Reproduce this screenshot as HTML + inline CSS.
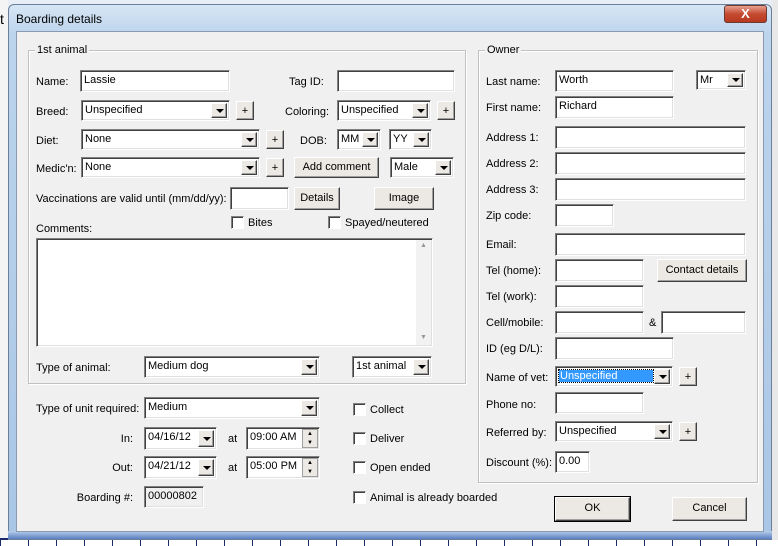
<!DOCTYPE html>
<html><head><meta charset="utf-8"><style>
*{box-sizing:border-box;margin:0;padding:0}
body{width:778px;height:546px;overflow:hidden;position:relative;background:#e8eef5;font-family:"Liberation Sans",sans-serif;font-size:11px;color:#000}
.a{position:absolute}
.l{position:absolute;white-space:nowrap;line-height:14px}
.in{position:absolute;background:#fff;border-top:1px solid #808080;border-left:1px solid #808080;border-right:1px solid #fff;border-bottom:1px solid #fff;box-shadow:inset 1px 1px 0 #404040,inset -1px -1px 0 #e0e0e0;padding:2px 0 0 3px;white-space:nowrap;line-height:14px;overflow:hidden}
.cb .ar{position:absolute;right:2px;top:2px;bottom:2px;width:16px;background:#ece9e4;border:1px solid;border-color:#fff #404040 #404040 #fff;box-shadow:inset -1px -1px 0 #a0a0a0}
.ar:after{content:"";position:absolute;left:4px;top:50%;margin-top:-2px;border-left:4px solid transparent;border-right:4px solid transparent;border-top:4px solid #000}
.bt{position:absolute;background:#ece9e4;border:1px solid;border-color:#fff #404040 #404040 #fff;box-shadow:inset -1px -1px 0 #a0a0a0;text-align:center;line-height:18px;white-space:nowrap}
.ck{position:absolute;width:13px;height:13px;background:#fff;border-top:1px solid #808080;border-left:1px solid #808080;border-right:1px solid #fff;border-bottom:1px solid #fff;box-shadow:inset 1px 1px 0 #404040}
.gb{position:absolute;border:1px solid #c0c0c0;box-shadow:1px 1px 0 #fff,inset 1px 1px 0 #fff}
.lg{position:absolute;top:-8px;left:6px;background:#f0f0f0;padding:0 2px;line-height:14px}
.r{text-align:right}
</style></head><body>
<div class="a" style="left:0;top:0;width:8px;height:546px;background:#f4f4f4"></div>
<div class="l" style="left:0;top:12px;font-size:14px">t</div>
<div class="a" style="left:0;top:540px;width:778px;height:6px;background:repeating-linear-gradient(90deg,#1a2a6a 0 1px,#fff 1px 28px)"></div>
<div class="a" style="left:0;top:538px;width:778px;height:2px;background:#1a2a6a"></div>
<div class="a" style="left:772px;top:0;width:6px;height:540px;background:#e8e8e8"></div>
<!-- window -->
<div class="a" style="left:8px;top:4px;width:764px;height:536px;border-radius:6px 6px 0 0;background:linear-gradient(180deg,#d6e6f5 0,#bcd4ec 30px,#aac6e6 100%);border:1px solid #6b7f99"></div>
<div class="a" style="left:8px;top:531px;width:764px;height:8px;background:linear-gradient(180deg,#b8d0ec,#5a7ec0)"></div>
<div class="l" style="left:16px;top:12px;font-size:12px">Boarding details</div>
<div class="a" style="left:724px;top:5px;width:43px;height:18px;border-radius:3px;background:linear-gradient(180deg,#e8a090,#c44a30 50%,#b83a20);border:1px solid #6b3a30;color:#fff;text-align:center;font-weight:bold;font-size:13px;line-height:16px">X</div>
<div class="a" style="left:16px;top:31px;width:748px;height:501px;background:#f0f0f0;border:1px solid #8a9ab0"></div>

<!-- 1st animal group -->
<div class="gb" style="left:28px;top:50px;width:438px;height:334px"><span class="lg">1st animal</span></div>
<div class="l" style="left:36px;top:75px">Name:</div>
<div class="in" style="left:80px;top:70px;width:150px;height:22px">Lassie</div>
<div class="l" style="left:289px;top:75px">Tag ID:</div>
<div class="in" style="left:337px;top:70px;width:118px;height:22px"></div>

<div class="l" style="left:36px;top:105px">Breed:</div>
<div class="in cb" style="left:81px;top:100px;width:149px;height:21px">Unspecified<span class="ar"></span></div>
<div class="bt" style="left:236px;top:101px;width:18px;height:19px">+</div>
<div class="l" style="left:285px;top:105px">Coloring:</div>
<div class="in cb" style="left:337px;top:100px;width:94px;height:21px">Unspecified<span class="ar"></span></div>
<div class="bt" style="left:437px;top:101px;width:18px;height:19px">+</div>

<div class="l" style="left:36px;top:134px">Diet:</div>
<div class="in cb" style="left:81px;top:129px;width:179px;height:21px">None<span class="ar"></span></div>
<div class="bt" style="left:266px;top:130px;width:18px;height:19px">+</div>
<div class="l" style="left:300px;top:134px">DOB:</div>
<div class="in cb" style="left:337px;top:129px;width:44px;height:21px">MM<span class="ar"></span></div>
<div class="in cb" style="left:389px;top:129px;width:43px;height:21px">YY<span class="ar"></span></div>

<div class="l" style="left:36px;top:162px">Medic'n:</div>
<div class="in cb" style="left:81px;top:157px;width:179px;height:21px">None<span class="ar"></span></div>
<div class="bt" style="left:266px;top:158px;width:18px;height:19px">+</div>
<div class="bt" style="left:294px;top:157px;width:85px;height:21px">Add comment</div>
<div class="in cb" style="left:390px;top:157px;width:64px;height:21px">Male<span class="ar"></span></div>

<div class="l" style="left:36px;top:192px">Vaccinations are valid until (mm/dd/yy):</div>
<div class="in" style="left:230px;top:187px;width:59px;height:23px"></div>
<div class="bt" style="left:294px;top:187px;width:46px;height:23px;line-height:20px">Details</div>
<div class="bt" style="left:374px;top:187px;width:60px;height:23px;line-height:20px">Image</div>
<div class="ck" style="left:231px;top:216px"></div><div class="l" style="left:248px;top:216px">Bites</div>
<div class="ck" style="left:328px;top:216px"></div><div class="l" style="left:345px;top:216px">Spayed/neutered</div>
<div class="l" style="left:36px;top:222px">Comments:</div>
<div class="in" style="left:36px;top:238px;width:397px;height:109px"></div>
<div class="a" style="left:416px;top:240px;width:15px;height:105px;background:#f2f2f2;color:#999;font-size:7px;text-align:center;line-height:12px">▲<div style="margin-top:80px">▼</div></div>

<div class="l" style="left:36px;top:361px">Type of animal:</div>
<div class="in cb" style="left:144px;top:356px;width:176px;height:22px">Medium dog<span class="ar"></span></div>
<div class="in cb" style="left:352px;top:356px;width:80px;height:22px">1st animal<span class="ar"></span></div>

<!-- lower left -->
<div class="l" style="left:36px;top:402px">Type of unit required:</div>
<div class="in cb" style="left:144px;top:397px;width:176px;height:22px">Medium<span class="ar"></span></div>
<div class="l r" style="left:60px;top:432px;width:73px">In:</div>
<div class="in cb" style="left:144px;top:427px;width:73px;height:23px">04/16/12<span class="ar"></span></div>
<div class="l" style="left:228px;top:432px">at</div>
<div class="in" style="left:246px;top:427px;width:74px;height:23px">09:00 AM</div>
<div class="a" style="left:302px;top:429px;width:16px;height:19px;background:#ece9e4;border:1px solid #a0a0a0;font-size:6px;line-height:9px;text-align:center">▲<br>▼</div>
<div class="l r" style="left:60px;top:461px;width:73px">Out:</div>
<div class="in cb" style="left:144px;top:456px;width:73px;height:23px">04/21/12<span class="ar"></span></div>
<div class="l" style="left:228px;top:461px">at</div>
<div class="in" style="left:246px;top:456px;width:74px;height:23px">05:00 PM</div>
<div class="a" style="left:302px;top:458px;width:16px;height:19px;background:#ece9e4;border:1px solid #a0a0a0;font-size:6px;line-height:9px;text-align:center">▲<br>▼</div>
<div class="l r" style="left:50px;top:491px;width:83px">Boarding #:</div>
<div class="in" style="left:144px;top:486px;width:60px;height:22px;background:#f0f0f0">00000802</div>
<div class="ck" style="left:353px;top:403px"></div><div class="l" style="left:370px;top:403px">Collect</div>
<div class="ck" style="left:353px;top:432px"></div><div class="l" style="left:370px;top:432px">Deliver</div>
<div class="ck" style="left:353px;top:461px"></div><div class="l" style="left:370px;top:461px">Open ended</div>
<div class="ck" style="left:353px;top:491px"></div><div class="l" style="left:370px;top:491px">Animal is already boarded</div>

<!-- owner -->
<div class="gb" style="left:478px;top:50px;width:280px;height:433px"><span class="lg">Owner</span></div>
<div class="l" style="left:486px;top:75px">Last name:</div>
<div class="in" style="left:555px;top:70px;width:119px;height:22px">Worth</div>
<div class="in cb" style="left:696px;top:70px;width:50px;height:20px">Mr<span class="ar"></span></div>
<div class="l" style="left:486px;top:101px">First name:</div>
<div class="in" style="left:555px;top:96px;width:119px;height:23px">Richard</div>
<div class="l" style="left:486px;top:131px">Address 1:</div>
<div class="in" style="left:555px;top:126px;width:191px;height:23px"></div>
<div class="l" style="left:486px;top:157px">Address 2:</div>
<div class="in" style="left:555px;top:152px;width:191px;height:23px"></div>
<div class="l" style="left:486px;top:183px">Address 3:</div>
<div class="in" style="left:555px;top:178px;width:191px;height:23px"></div>
<div class="l" style="left:486px;top:209px">Zip code:</div>
<div class="in" style="left:555px;top:204px;width:59px;height:23px"></div>
<div class="l" style="left:486px;top:238px">Email:</div>
<div class="in" style="left:555px;top:233px;width:191px;height:23px"></div>
<div class="l" style="left:486px;top:264px">Tel (home):</div>
<div class="in" style="left:555px;top:259px;width:89px;height:23px"></div>
<div class="bt" style="left:657px;top:259px;width:90px;height:23px;line-height:20px">Contact details</div>
<div class="l" style="left:486px;top:290px">Tel (work):</div>
<div class="in" style="left:555px;top:285px;width:89px;height:23px"></div>
<div class="l" style="left:486px;top:316px">Cell/mobile:</div>
<div class="in" style="left:555px;top:311px;width:89px;height:23px"></div>
<div class="l" style="left:649px;top:316px">&amp;</div>
<div class="in" style="left:661px;top:311px;width:85px;height:23px"></div>
<div class="l" style="left:486px;top:342px">ID (eg D/L):</div>
<div class="in" style="left:555px;top:337px;width:119px;height:23px"></div>
<div class="l" style="left:486px;top:371px">Name of vet:</div>
<div class="in cb" style="left:555px;top:366px;width:118px;height:21px"><span style="background:#3399ff;color:#fff;outline:1px dotted #000;padding:0 36px 0 1px">Unspecified</span><span class="ar"></span></div>
<div class="bt" style="left:679px;top:367px;width:18px;height:19px">+</div>
<div class="l" style="left:486px;top:398px">Phone no:</div>
<div class="in" style="left:555px;top:392px;width:89px;height:22px"></div>
<div class="l" style="left:486px;top:426px">Referred by:</div>
<div class="in cb" style="left:555px;top:421px;width:118px;height:21px">Unspecified<span class="ar"></span></div>
<div class="bt" style="left:679px;top:422px;width:18px;height:19px">+</div>
<div class="l" style="left:486px;top:456px">Discount (%):</div>
<div class="in" style="left:555px;top:451px;width:35px;height:22px">0.00</div>
<div class="bt" style="left:555px;top:497px;width:75px;height:24px;line-height:21px;outline:1px solid #000">OK</div>
<div class="bt" style="left:672px;top:497px;width:75px;height:24px;line-height:21px">Cancel</div>
</body></html>
